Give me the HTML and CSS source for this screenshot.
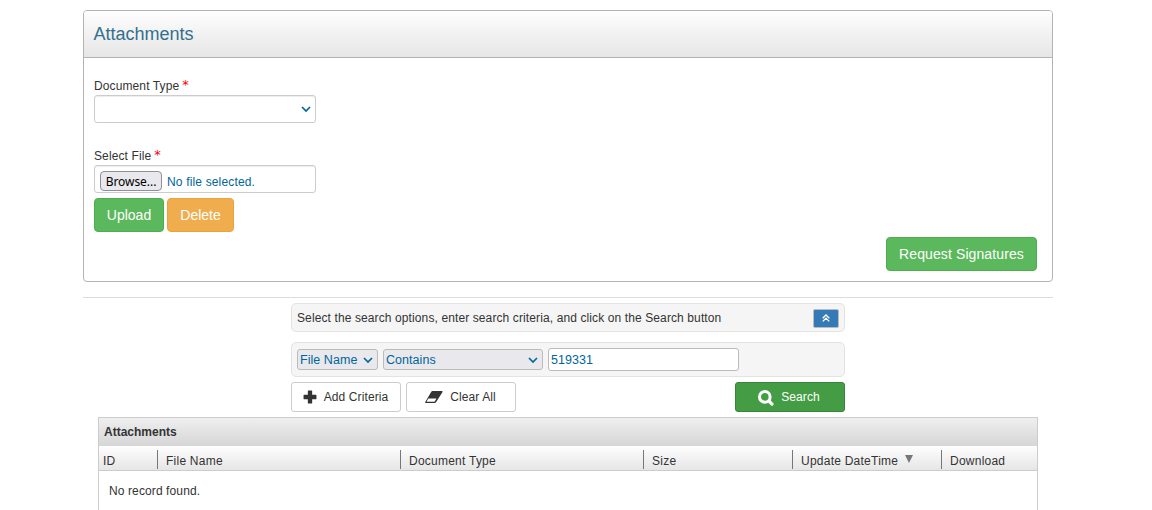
FILE: index.html
```html
<!DOCTYPE html>
<html lang="en">
<head>
<meta charset="utf-8">
<title>Attachments</title>
<link rel="stylesheet" href="styles.css">
</head>
<body>
<main class="page">
  <section class="panel">
    <h1 class="panel-title">Attachments</h1>
    <div class="panel-body">
      <div class="label"><span>Document Type</span><span class="required">*</span></div>
      <div class="field type-field"><svg class="chevron" viewBox="0 0 10 6"><path d="M1 1l4 4 4-4"/></svg></div>
      <div class="label"><span>Select File</span><span class="required">*</span></div>
      <div class="field file-field"><button class="browse">Browse...</button><span class="file-status">No file selected.</span></div>
      <div class="actions"><button class="btn green">Upload</button><button class="btn orange">Delete</button></div>
      <div class="signatures"><button class="btn green request">Request Signatures</button></div>
    </div>
  </section>
  <div class="divider"></div>
  <section class="search">
    <div class="box hint"><span>Select the search options, enter search criteria, and click on the Search button</span>
      <button class="collapse" aria-label="Collapse"><svg viewBox="0 0 8 8"><path d="M.7 4.2L4 1l3.300 3.200M.7 7.400L4 4.200l3.300 3.200"/></svg></button>
    </div>
    <div class="box criteria">
      <div class="select name"><span>File Name</span><svg class="chevron" viewBox="0 0 10 6"><path d="M1 1l4 4 4-4"/></svg></div>
      <div class="select operator"><span>Contains</span><svg class="chevron" viewBox="0 0 10 6"><path d="M1 1l4 4 4-4"/></svg></div>
      <div class="value"><span>519331</span></div>
    </div>
    <div class="tools">
      <button class="tool add"><svg width="14" height="14" viewBox="0.500 0.500 13 13"><path fill="#333" d="M5 1.500q0-.5.500-.5h3q.5 0 .5.500V5h3.500q.5 0 .5.500v3q0 .5-.5.500H9v3.500q0 .5-.5.500h-3q-.5 0-.5-.5V9H1.500Q1 9 1 8.500v-3Q1 5 1.500 5H5z"/></svg><span>Add Criteria</span></button>
      <button class="tool clear"><svg width="18" height="12" viewBox="0 0 18 12"><path fill="#333" fill-rule="evenodd" d="M7.500 0H16.800q1.200 0 .6 1.200L11 11.300q-.5.700-1.300.700H1q-1.200 0-.6-1.200L6.300.700q.4-.7 1.200-.7zM3.300 7.500L1.500 10.800h8l2-3.300z"/></svg><span>Clear All</span></button>
      <button class="tool find"><svg width="16" height="16" viewBox="0 0 16 16"><circle cx="6.800" cy="6.900" r="5.300" fill="none" stroke="#fff" stroke-width="3"/><path d="M10.900 11l3.100 3.100" fill="none" stroke="#fff" stroke-width="3.200" stroke-linecap="round"/></svg><span>Search</span></button>
    </div>
  </section>
  <section class="grid">
    <h2 class="grid-title">Attachments</h2>
    <div class="columns">
      <div class="col"><span>ID</span></div>
      <div class="col"><span>File Name</span></div>
      <div class="col"><span>Document Type</span></div>
      <div class="col"><span>Size</span></div>
      <div class="col"><span>Update DateTime</span><i class="sort"></i></div>
      <div class="col"><span>Download</span></div>
    </div>
    <div class="empty"><span>No record found.</span></div>
  </section>
</main>
</body>
</html>
```
FILE: styles.css
```css
* { box-sizing: border-box; }
body { margin: 0; height: 510px; overflow: hidden; background: #fff; color: #333; font: 12px/18px "Liberation Sans", Arial, sans-serif; letter-spacing: .11px; }
button { margin: 0; padding: 0; font: inherit; color: inherit; letter-spacing: inherit; }
h1, h2 { margin: 0; }
.page { width: 970px; margin-left: 83px; padding-top: 10px; }
.panel { height: 272px; border: 1px solid #b3b3b3; border-radius: 4px; }
.panel-title { height: 47px; padding: 0 0 0 9.500px; border-bottom: 1px solid #b3b3b3; border-radius: 3px 3px 0 0; background: linear-gradient(#fefefe, #e6e6e6); color: #31708f; font-size: 18px; font-weight: 400; line-height: 46px; letter-spacing: 0; }
.panel-body { padding: 19px 15px 0 10px; }
.label { display: flex; gap: 3px; height: 18px; }
.required { color: #f00; font-family: "DejaVu Sans", sans-serif; font-size: 13px; line-height: 16px; }
.field { width: 222px; height: 28px; border: 1px solid #ccc; border-radius: 3px; box-shadow: inset 0 1px 1px rgba(0, 0, 0, .075); display: flex; align-items: center; }
.type-field { justify-content: flex-end; padding-right: 4px; margin-bottom: 24px; }
.chevron { width: 10px; height: 6px; flex: none; fill: none; stroke: #069; stroke-width: 1.700; }
.file-field { padding: 3px 5px 0; gap: 5px; color: #069; }
.file-status { padding-top: 2px; letter-spacing: .16px; }
.browse { width: 62px; height: 20px; border: 1px solid #8f8f9d; border-radius: 4px; background: #e9e9ed; color: #000; font-family: "Noto Sans", sans-serif; line-height: 18px; padding-top: 1px; letter-spacing: -.05px; }
.actions { display: flex; gap: 3px; margin-top: 5px; }
.btn { height: 34px; width: 70px; border: 1px solid #4cae4c; border-radius: 4px; background: #5cb85c; color: #fff; font-size: 14px; line-height: 20px; letter-spacing: 0; }
.orange { width: 67px; border-color: #eea236; background: #f0ad4e; }
.signatures { display: flex; justify-content: flex-end; margin-top: 5px; }
.request { width: 151px; letter-spacing: .1px; }
.divider { height: 1px; margin-top: 15px; background: #ddd; }
.search { width: 554px; margin: 5px 0 0 208px; }
.box { display: flex; align-items: center; border: 1px solid #e3e3e3; border-radius: 5px; background: #f5f5f5; padding: 0 5px; }
.hint { height: 29px; justify-content: space-between; }
.collapse { display: flex; align-items: center; justify-content: center; width: 26px; height: 19px; margin-top: 1px; border: 1px solid #bbb; border-radius: 2px; background: #337ab7; }
.collapse svg { width: 8px; height: 8px; fill: none; stroke: #fff; stroke-width: 1.300; }
.criteria { height: 35px; margin-top: 10px; gap: 5px; font-size: 12.500px; color: #069; letter-spacing: .05px; }
.select { display: flex; align-items: center; justify-content: space-between; height: 21px; padding: 0 4px 0 2px; border: 1px solid #bbb; border-radius: 3px; background: #e9e9ed; }
.name { width: 81px; }
.operator { width: 160px; }
.value { width: 191px; height: 23px; padding-left: 2px; border: 1px solid #bbb; border-radius: 3px; background: #fff; line-height: 22px; }
.tools { display: flex; gap: 5px; margin-top: 5px; }
.tool { display: flex; align-items: center; justify-content: center; gap: 7px; width: 110px; height: 30px; padding-right: 1px; border: 1px solid #ccc; border-radius: 3px; background: #fff; }
.find { margin-left: auto; padding-right: 2px; border-color: #398439; background: #449d44; color: #fff; }
.find svg { margin-top: 1px; }
.grid { width: 940px; height: 100px; margin: 5px 0 0 15px; border: 1px solid #ccc; }
.grid-title { height: 28px; padding-left: 5px; background: linear-gradient(#efefef, #d6d6d6); font-size: 12px; line-height: 28px; letter-spacing: 0; }
.columns { display: grid; grid-template-columns: 58px 243px 243px 149px 149px 96px; height: 25px; padding-top: 4px; border-bottom: 1px solid #ccc; background: linear-gradient(#fefefe, #e6e6e6); letter-spacing: .24px; }
.col { display: flex; height: 19px; padding-left: 8px; border-left: 1px solid #777; line-height: 22px; }
.col:first-child { padding-left: 4px; border-left: 0; }
.sort { margin: 5px 0 0 7px; width: 0; height: 0; border: 4px solid transparent; border-top: 8px solid #777; border-bottom: 0; }
.empty { padding: 11px 10px; }
```
